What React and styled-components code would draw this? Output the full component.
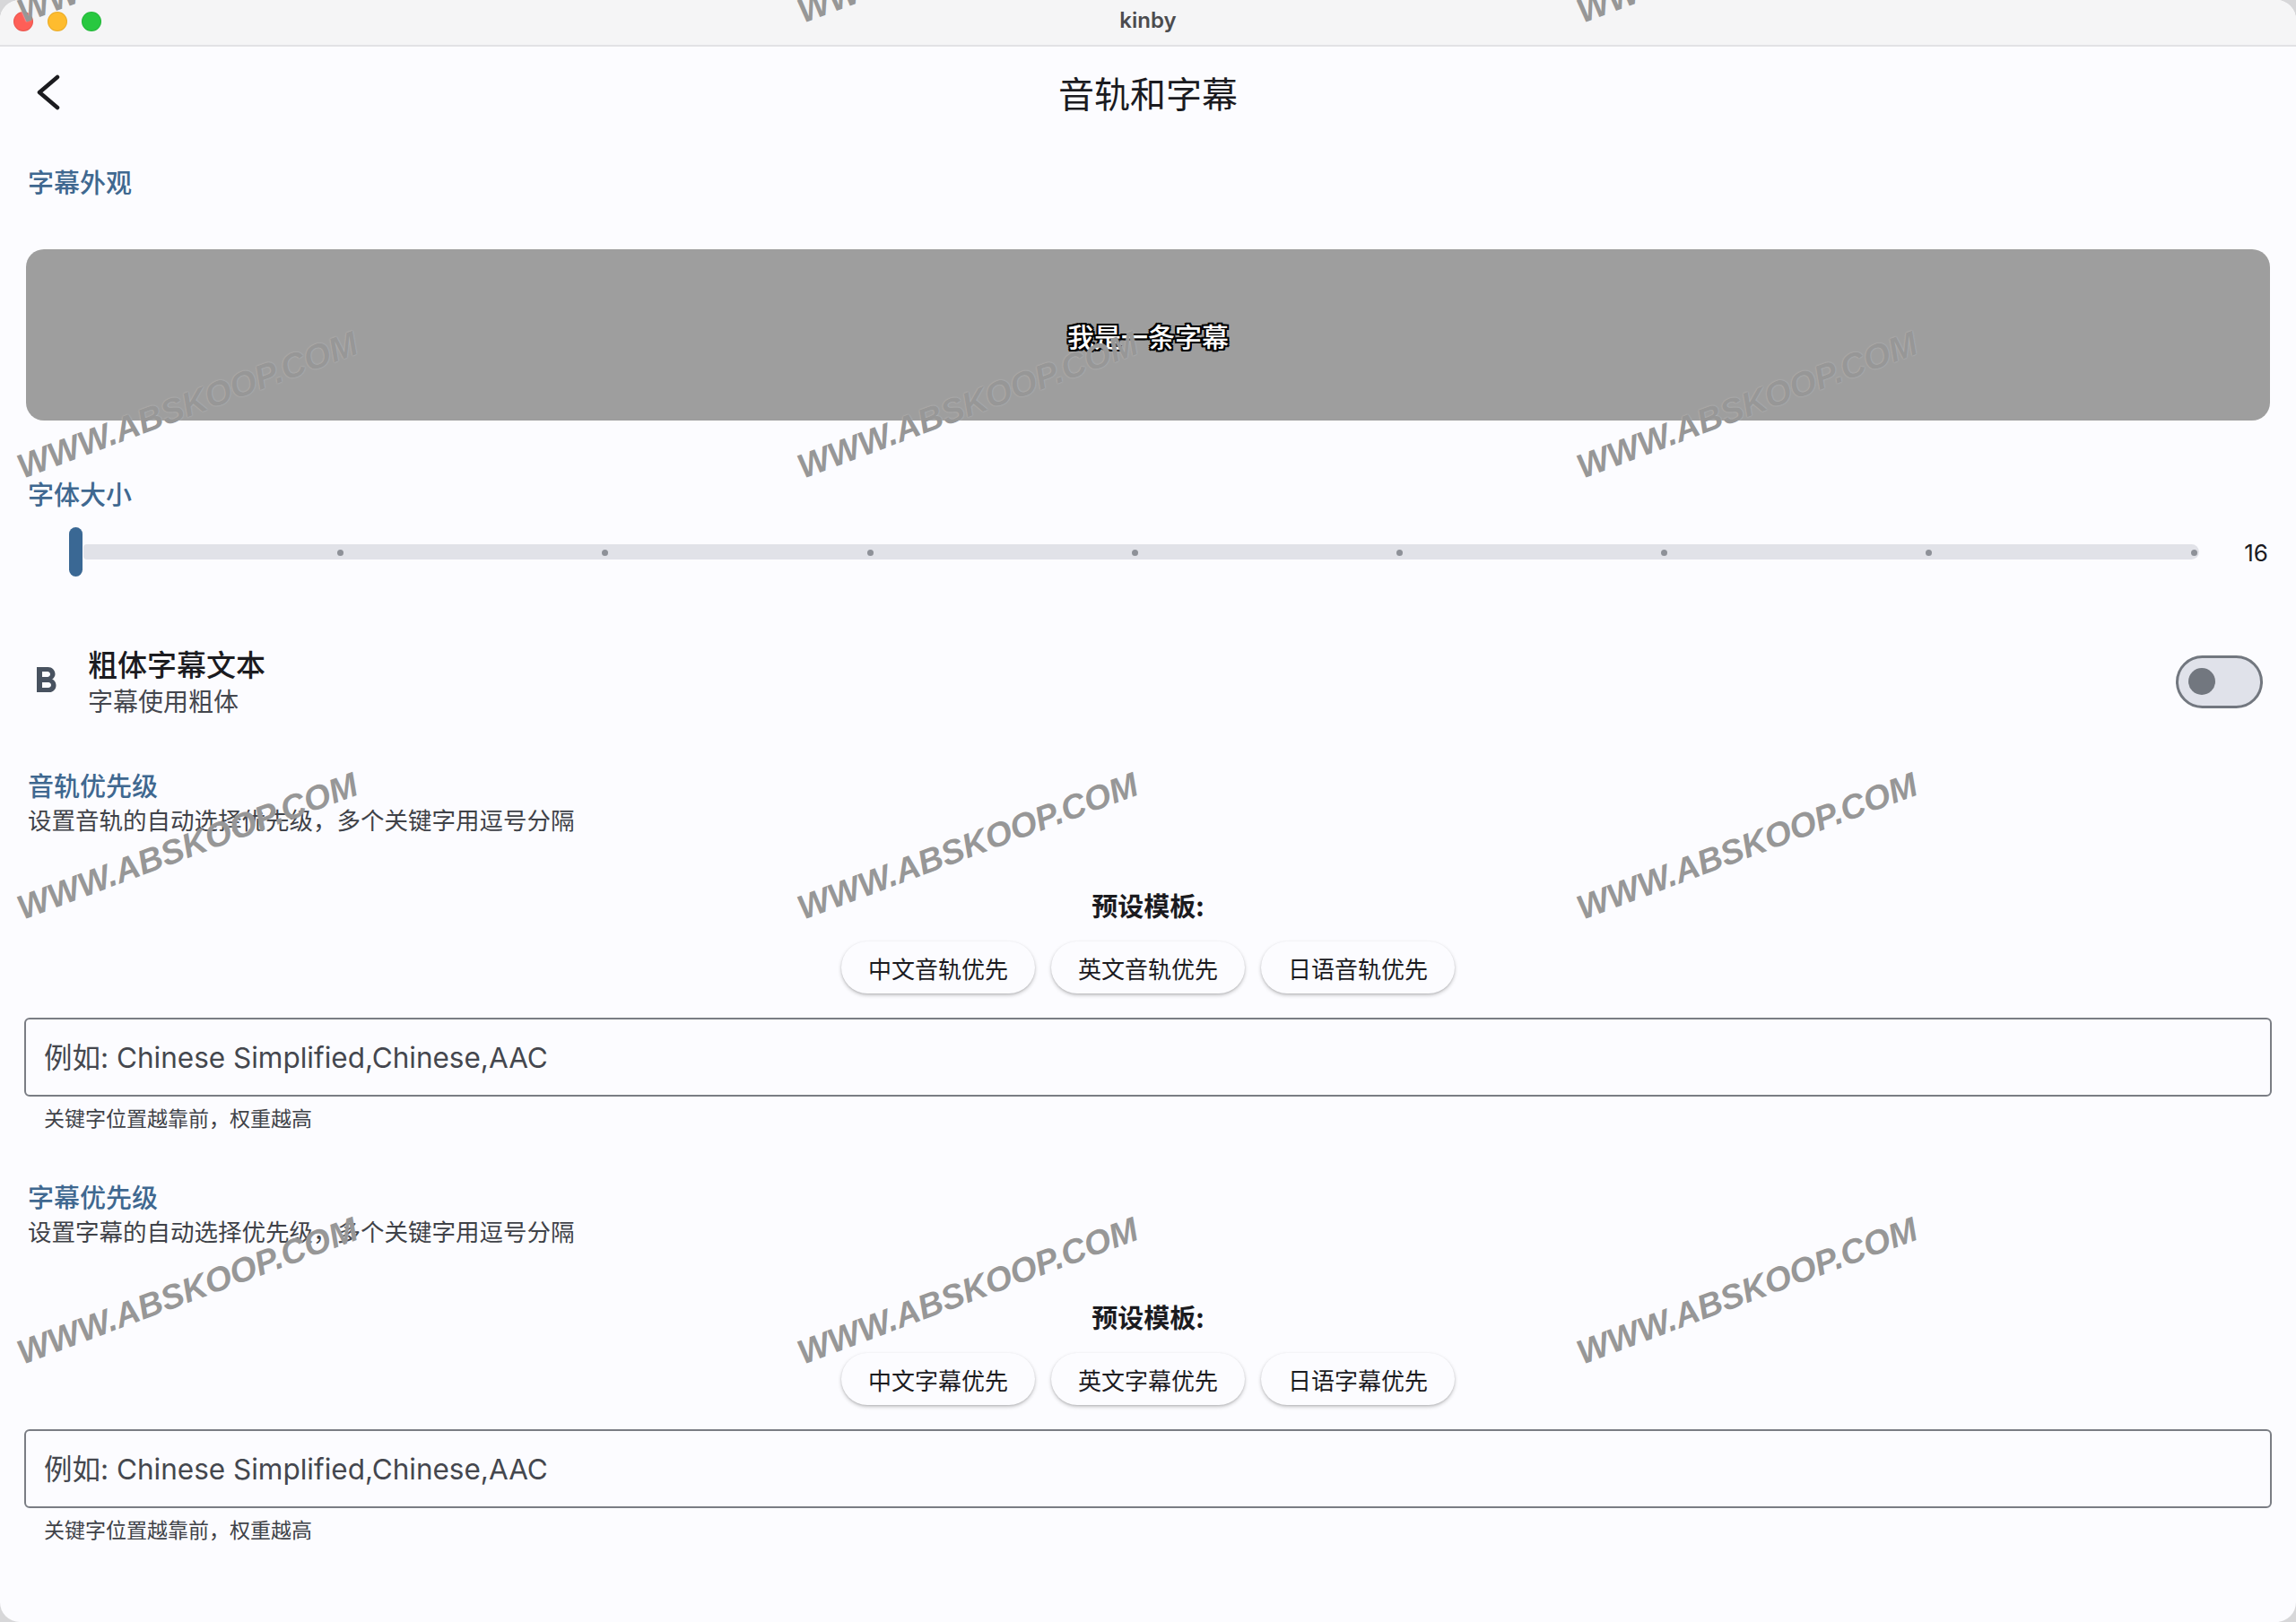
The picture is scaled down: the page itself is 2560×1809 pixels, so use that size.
import React from 'react';
import styled, { createGlobalStyle } from 'styled-components';
import { MdFormatBold } from 'react-icons/md';

const Global = createGlobalStyle`
  html, body { margin: 0; padding: 0; background: #d7d7d9; }
  body { font-family: "Inter", "Noto Sans CJK SC", sans-serif; -webkit-font-smoothing: antialiased; }
  * { box-sizing: border-box; }
`;

const Window = styled.div`
  position: relative;
  width: 2560px;
  height: 1809px;
  overflow: hidden;
  border-radius: 22px;
  background: #fcfcff;
  display: flex;
  flex-direction: column;
`;

const TitleBar = styled.div`
  height: 52px;
  flex: 0 0 52px;
  display: grid;
  grid-template-columns: 1fr auto 1fr;
  align-items: center;
  background: #f5f5f6;
  border-bottom: 2px solid #e2e2e5;
`;

const Lights = styled.div`
  display: flex;
  gap: 16px;
  padding-left: 15px;
  margin-top: -2px;
`;

const Light = styled.span`
  width: 22px;
  height: 22px;
  border-radius: 50%;
  background: ${p => p.$c};
  box-shadow: inset 0 0 0 1px rgba(0,0,0,0.08);
`;

const WinTitle = styled.div`
  font-family: "Inter", sans-serif;
  font-size: 24px;
  font-weight: 600;
  color: #4c4c4e;
  line-height: 1;
  margin-top: -4px;
`;

const AppBar = styled.div`
  height: 102px;
  flex: 0 0 102px;
  display: grid;
  grid-template-columns: 1fr auto 1fr;
  align-items: center;
`;

const BackButton = styled.button`
  justify-self: start;
  margin-left: 40px;
  padding: 0;
  border: 0;
  background: none;
  display: flex;
  cursor: pointer;
`;

const PageTitle = styled.h1`
  margin: 0;
  font-family: "Noto Sans CJK SC", sans-serif;
  font-size: 40px;
  font-weight: 400;
  line-height: 1;
  color: #1b1b1f;
`;

const Content = styled.div`
  padding: 0 29px;
  display: flex;
  flex-direction: column;
`;

const SectionTitle = styled.div`
  margin-top: ${p => p.$mt}px;
  padding-left: 2px;
  font-family: "Noto Sans CJK SC", sans-serif;
  font-size: 29px;
  font-weight: 500;
  line-height: 40px;
  color: #3f6890;
`;

const Preview = styled.div`
  margin-top: 56px;
  height: 191px;
  border-radius: 20px;
  background: #9e9e9e;
  display: flex;
  align-items: center;
  justify-content: center;
`;

const PreviewText = styled.span`
  font-family: "Noto Sans CJK SC", sans-serif;
  font-size: 30px;
  font-weight: 500;
  color: #ffffff;
  text-shadow:
    -2px -2px 0 #000, 2px -2px 0 #000, -2px 2px 0 #000, 2px 2px 0 #000,
    0 -2px 0 #000, 0 2px 0 #000, -2px 0 0 #000, 2px 0 0 #000;
`;

const SliderRow = styled.div`
  margin-top: 18px;
  height: 56px;
  display: flex;
  align-items: center;
`;

const SliderArea = styled.div`
  position: relative;
  flex: 1;
  height: 56px;
  margin-left: 48px;
`;

const Track = styled.div`
  position: absolute;
  left: 16px;
  right: 0;
  top: 19px;
  height: 17px;
  border-radius: 4px 9px 9px 4px;
  background: #e1e2e8;
`;

const Ticks = styled.div`
  position: absolute;
  left: 4px;
  right: 2.5px;
  top: 0;
  bottom: 0;
  display: flex;
  align-items: center;
  justify-content: space-between;
`;

const Tick = styled.span`
  width: 7px;
  height: 7px;
  border-radius: 50%;
  background: #8e9198;
`;

const Thumb = styled.div`
  position: absolute;
  left: 0;
  top: 0;
  width: 15px;
  height: 55px;
  border-radius: 8px;
  background: #3a6894;
`;

const SliderValue = styled.div`
  width: 79px;
  text-align: right;
  padding-right: 2px;
  font-family: "Inter", sans-serif;
  font-size: 26px;
  color: #1b1b1f;
`;

const SwitchRow = styled.div`
  margin-top: 33px;
  height: 166px;
  display: flex;
  align-items: center;
`;

const RowIcon = styled.div`
  margin-left: -2px;
  width: 48px;
  height: 48px;
  display: flex;
  color: #485260;
`;

const RowText = styled.div`
  flex: 1;
  margin-left: 23px;
  display: flex;
  flex-direction: column;
`;

const RowTitle = styled.div`
  font-family: "Noto Sans CJK SC", sans-serif;
  font-size: 33px;
  font-weight: 500;
  line-height: 42px;
  color: #1b1b1f;
`;

const RowSub = styled.div`
  font-family: "Noto Sans CJK SC", sans-serif;
  font-size: 28px;
  line-height: 40px;
  color: #44474e;
`;

const Switch = styled.div`
  margin-right: 8px;
  width: 97px;
  height: 59px;
  border-radius: 30px;
  border: 3.5px solid #72777f;
  background: #e0e2ea;
  display: flex;
  align-items: center;
  padding-left: 10.5px;
`;

const SwitchKnob = styled.span`
  width: 30px;
  height: 30px;
  border-radius: 50%;
  background: #72777f;
`;

const Desc = styled.div`
  margin-top: 1px;
  padding-left: 2px;
  font-family: "Noto Sans CJK SC", sans-serif;
  font-size: 26.5px;
  line-height: 36px;
  color: #3f4248;
`;

const PresetLabel = styled.div`
  margin-top: 57px;
  text-align: center;
  font-family: "Noto Sans CJK SC", sans-serif;
  font-size: 29px;
  font-weight: 700;
  line-height: 40px;
  color: #1b1b1f;
`;

const ButtonGroup = styled.div`
  margin-top: 21px;
  display: flex;
  justify-content: center;
  gap: 18px;
`;

const Chip = styled.button`
  height: 58px;
  padding: 0 30px;
  border: 0;
  border-radius: 29px;
  background: #fcfcff;
  box-shadow: 0 2px 4px rgba(0, 0, 0, 0.22), 0 1px 2px rgba(0, 0, 0, 0.1);
  font-family: "Noto Sans CJK SC", sans-serif;
  font-size: 26px;
  color: #1b1b1f;
  cursor: pointer;
`;

const Field = styled.input`
  margin: 27px -2px 0;
  height: 88px;
  border: 2px solid #7a7d84;
  border-radius: 6px;
  background: transparent;
  padding: 0 0 0 20px;
  font-family: "Inter", "Noto Sans CJK SC", sans-serif;
  font-size: 31.5px;
  color: #1b1b1f;
  outline: none;
  &::placeholder { color: #44474e; }
`;

const Helper = styled.div`
  margin-top: 8px;
  padding-left: 20px;
  font-family: "Noto Sans CJK SC", sans-serif;
  font-size: 23px;
  line-height: 30px;
  color: #3f4248;
`;

const Watermark = styled.div`
  position: absolute;
  transform: translate(-50%, -50%) rotate(-20.5deg);
  font-family: "Liberation Sans", sans-serif;
  font-size: 38px;
  font-weight: 700;
  font-style: italic;
  white-space: nowrap;
  color: #979797;
  text-shadow: 0 0 2px rgba(255, 255, 255, 0.35);
  pointer-events: none;
`;

const PrioritySection = ({ title, desc, presets, mt }) => (
  <>
    <SectionTitle $mt={mt}>{title}</SectionTitle>
    <Desc>{desc}</Desc>
    <PresetLabel>预设模板:</PresetLabel>
    <ButtonGroup>
      {presets.map(p => <Chip key={p}>{p}</Chip>)}
    </ButtonGroup>
    <Field placeholder="例如: Chinese Simplified,Chinese,AAC" />
    <Helper>关键字位置越靠前，权重越高</Helper>
  </>
);

const marks = [];
[-56, 452, 944, 1440].forEach(y => [209, 1079, 1948].forEach(x => marks.push({ x, y })));

export default function App() {
  return (
    <>
      <Global />
      <Window>
        <TitleBar>
          <Lights>
            <Light $c="#fe5f57" />
            <Light $c="#febc2e" />
            <Light $c="#28c840" />
          </Lights>
          <WinTitle>kinby</WinTitle>
          <div />
        </TitleBar>
        <AppBar>
          <BackButton aria-label="back">
            <svg width="28" height="40" viewBox="0 0 28 40">
              <polyline points="24,3 4,20 24,37" fill="none" stroke="#1b1b1f" strokeWidth="4.5" strokeLinecap="round" strokeLinejoin="round" />
            </svg>
          </BackButton>
          <PageTitle>音轨和字幕</PageTitle>
          <div />
        </AppBar>
        <Content>
          <SectionTitle $mt={28}>字幕外观</SectionTitle>
          <Preview>
            <PreviewText>我是一条字幕</PreviewText>
          </Preview>
          <SectionTitle $mt={61}>字体大小</SectionTitle>
          <SliderRow>
            <SliderArea>
              <Track />
              <Ticks>
                {Array.from({ length: 9 }).map((_, i) => <Tick key={i} />)}
              </Ticks>
              <Thumb />
            </SliderArea>
            <SliderValue>16</SliderValue>
          </SliderRow>
          <SwitchRow>
            <RowIcon><MdFormatBold size={48} /></RowIcon>
            <RowText>
              <RowTitle>粗体字幕文本</RowTitle>
              <RowSub>字幕使用粗体</RowSub>
            </RowText>
            <Switch><SwitchKnob /></Switch>
          </SwitchRow>
          <PrioritySection
            mt={12}
            title="音轨优先级"
            desc="设置音轨的自动选择优先级，多个关键字用逗号分隔"
            presets={['中文音轨优先', '英文音轨优先', '日语音轨优先']}
          />
          <PrioritySection
            mt={53}
            title="字幕优先级"
            desc="设置字幕的自动选择优先级，多个关键字用逗号分隔"
            presets={['中文字幕优先', '英文字幕优先', '日语字幕优先']}
          />
        </Content>
        {marks.map((m, i) => (
          <Watermark key={i} style={{ left: m.x, top: m.y }}>WWW.ABSKOOP.COM</Watermark>
        ))}
      </Window>
    </>
  );
}
